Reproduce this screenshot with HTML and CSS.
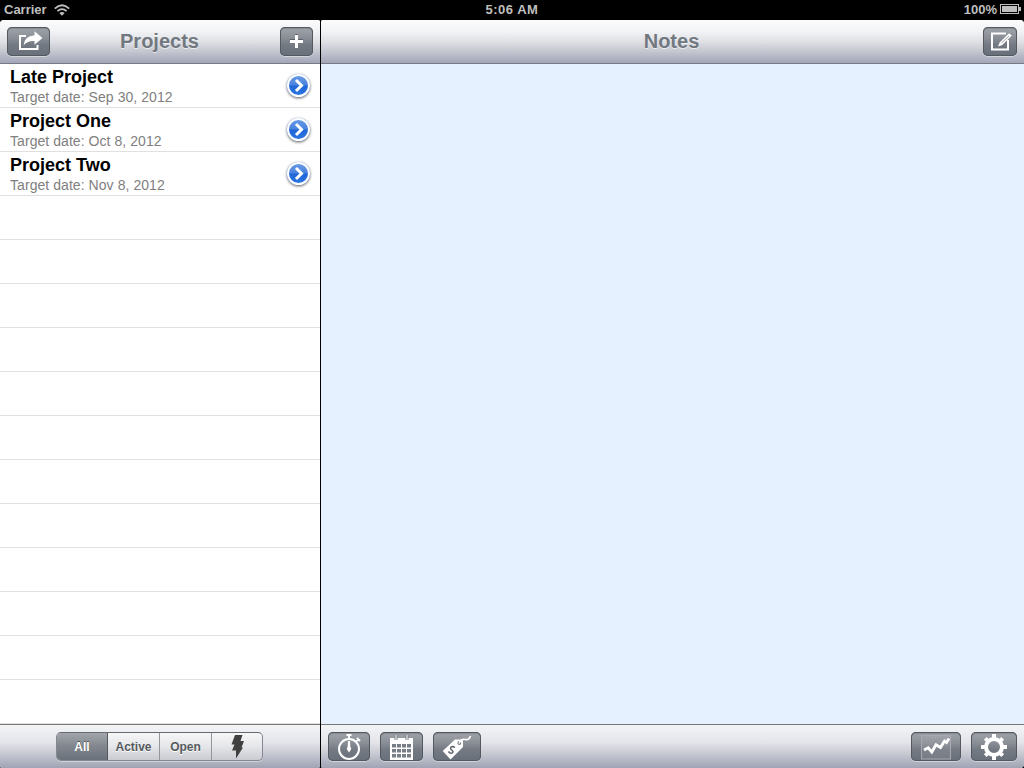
FILE: index.html
```html
<!DOCTYPE html>
<html lang="en">
<head>
<meta charset="utf-8">
<title>Projects</title>
<link rel="stylesheet" href="styles.css">
</head>
<body>
<div class="screen">
  <header class="status">
    <div class="status-left"><span class="carrier">Carrier</span>
      <svg class="wifi" width="16" height="12" viewBox="0 0 16 12"><g fill="none" stroke="#bfbfbf" stroke-width="1.8"><path d="M.8 4.6Q8-2.2 15.2 4.6"/><path d="M3.4 7.2Q8 3 12.6 7.2"/></g><path d="M5.3 9Q8 6.8 10.7 9L8 11.7Z" fill="#bfbfbf"/></svg>
    </div>
    <span class="clock">5:06 AM</span>
    <div class="status-right"><span class="percent">100%</span>
      <svg class="battery" width="21" height="10" viewBox="0 0 21 10"><rect x=".5" y=".5" width="18" height="9" fill="none" stroke="#bfbfbf"/><rect x="2" y="2" width="15" height="6" fill="#bfbfbf"/><path d="M19 3h2v4h-2z" fill="#bfbfbf"/></svg>
    </div>
  </header>
  <div class="split">
    <section class="pane sidebar">
      <div class="bar navbar">
        <button class="btn share" aria-label="Share"><svg width="43" height="29" viewBox="0 0 43 29"><path d="M19 9H13V22H30.500V18" fill="none" stroke="#fff" stroke-width="2"/><path d="M27.500 4.300L35.500 11L27.500 17.700V14Q20.500 13.200 16.500 18.500Q17 9 27.500 8.200Z" fill="#fff"/></svg></button>
        <h1 class="title">Projects</h1>
        <button class="btn add" aria-label="Add"><svg width="33" height="29" viewBox="0 0 33 29"><path d="M10 13h5V8h3v5h5v3h-5v5h-3v-5h-5z" fill="#fff"/><path d="M10 12.500h5M18 12.500h5M15 7.500h3" stroke="#4b5056" stroke-opacity=".7"/></svg></button>
      </div>
      <ul class="list">
        <li class="row"><div><div class="name">Late Project</div><div class="date">Target date: Sep 30, 2012</div></div><span class="disclosure"><svg width="23" height="23" viewBox="0 0 23 23"><path d="M9 6L14.500 11.500L9 17" fill="none" stroke="#fff" stroke-width="3"/></svg></span></li>
        <li class="row"><div><div class="name">Project One</div><div class="date">Target date: Oct 8, 2012</div></div><span class="disclosure"><svg width="23" height="23" viewBox="0 0 23 23"><path d="M9 6L14.500 11.500L9 17" fill="none" stroke="#fff" stroke-width="3"/></svg></span></li>
        <li class="row"><div><div class="name">Project Two</div><div class="date">Target date: Nov 8, 2012</div></div><span class="disclosure"><svg width="23" height="23" viewBox="0 0 23 23"><path d="M9 6L14.500 11.500L9 17" fill="none" stroke="#fff" stroke-width="3"/></svg></span></li>
        <li class="row"></li><li class="row"></li><li class="row"></li><li class="row"></li>
        <li class="row"></li><li class="row"></li><li class="row"></li><li class="row"></li>
        <li class="row"></li><li class="row"></li><li class="row"></li><li class="row"></li>
      </ul>
      <div class="bar toolbar filters">
        <div class="segments">
          <button class="segment selected">All</button>
          <button class="segment">Active</button>
          <button class="segment">Open</button>
          <button class="segment" aria-label="Quick"><svg width="13" height="24" viewBox="0 0 13 24"><path d="M4 0H11.500L9.500 6H13L10.500 12.500H12L5 23.500V15.500H1L3.500 9.500H.5Z" fill="#404040"/></svg></button>
        </div>
      </div>
    </section>
    <section class="pane main">
      <div class="bar navbar">
        <h1 class="title">Notes</h1>
        <button class="btn compose" aria-label="Compose"><svg width="34" height="29" viewBox="0 0 34 29"><path d="M23 6.500H9V22.500H25V13" fill="none" stroke="#fff" stroke-width="2"/><path d="M15 19.500L16.700 15.500L26 6.300L28.800 8.500L19.300 18Z" fill="#fff"/><path d="M18.500 16L26 9" stroke="#777d84" stroke-width=".7"/></svg></button>
      </div>
      <div class="notes"></div>
      <div class="bar toolbar">
        <button class="btn timer" aria-label="Timer"><svg width="42" height="29" viewBox="0 0 42 29"><g fill="none" stroke="#fff" stroke-width="2"><circle cx="21" cy="17" r="10"/><path d="M21 3V7M18.500 3H23.500M28 9.500L30.500 7.500M29 6L32 9"/></g><path d="M20 9H22L22.300 14.500L23.300 17L21 20.500L18.700 17L19.700 14.500Z" fill="#fff"/></svg></button>
        <button class="btn calendar" aria-label="Calendar"><svg width="43" height="29" viewBox="0 0 43 29"><path d="M10 6H33V28H10Z" fill="#fff"/><path d="M12 12h4v3.500h-4zM17 12h4v3.500h-4zM22 12h4v3.500h-4zM27 12h4v3.500h-4zM12 17h4v3.500h-4zM17 17h4v3.500h-4zM22 17h4v3.500h-4zM27 17h4v3.500h-4zM12 22h4v3.500h-4zM17 22h4v3.500h-4zM22 22h4v3.500h-4zM27 22h4v3.500h-4z" fill="#777d84"/><path d="M16 3v5M27 3v5" stroke="#777d84" stroke-width="3"/><path d="M16 3v5M27 3v5" stroke="#d5d7da" stroke-width="1.500"/></svg></button>
        <button class="btn tag" aria-label="Expenses"><svg width="48" height="29" viewBox="0 0 48 29"><path d="M9.700 19L22 7.500H28.500L30 9V15L17.500 27.500Z" fill="#fff"/><circle cx="26.300" cy="11" r="1.900" fill="#777d84"/><path d="M26 11.500Q28 6.500 32 7.500T37.500 4" fill="none" stroke="#fff" stroke-width="1.600"/><path d="M22 15.500C19 13.500 16.500 15.500 18 17.300S20.800 19.500 19.500 20.700S16.500 21 15.500 19.500" fill="none" stroke="#5f666e" stroke-width="1.500"/></svg></button>
        <span class="spacer"></span>
        <button class="btn chart" aria-label="Chart"><svg width="50" height="29" viewBox="0 0 50 29"><rect x="10.500" y="3.500" width="29" height="23.500" fill="#fff" fill-opacity=".08" stroke="#a7abb0"/><path d="M13 18L17.200 15.800L20.800 20L25 12.800L29.500 15.500L33.500 9L35.500 10.500L38 6.500" fill="none" stroke="#fff" stroke-width="2.800"/></svg></button>
        <button class="btn gear" aria-label="Settings"><svg width="46" height="29" viewBox="0 0 46 29"><circle cx="23" cy="15" r="8" fill="none" stroke="#fff" stroke-width="4"/><g stroke="#fff" stroke-width="4"><path d="M23 2V6M23 24V28M10 15H14M32 15H36M14.300 6.300L16.600 8.600M29.400 21.400L31.700 23.700M14.300 23.700L16.600 21.400M29.400 8.600L31.700 6.300"/></g></svg></button>
      </div>
    </section>
  </div>
</div>
</body>
</html>
```
FILE: styles.css
```css
* { box-sizing: border-box; }
body { margin: 0; background: #000; font-family: "Liberation Sans", Arial, sans-serif; }
.screen { width: 1024px; height: 768px; display: flex; flex-direction: column; background: #000; overflow: hidden; }
.status { height: 20px; display: grid; grid-template-columns: 1fr auto 1fr; align-items: start; padding: 1px 3px 0 4px; color: #bfbfbf; font-size: 13px; font-weight: bold; line-height: 18px; }
.status-left, .status-right { display: flex; align-items: center; height: 18px; }
.status-left { gap: 7px; }
.status-right { justify-content: flex-end; gap: 3px; }
.wifi { margin-top: 0; }
.battery { margin-bottom: 2px; }
.clock { height: 18px; letter-spacing: .5px; padding-right: 1px; }
.split { flex: 1; display: flex; gap: 1px; min-height: 0; }
.pane { display: flex; flex-direction: column; overflow: hidden; }
.sidebar { width: 320px; background: #fff; border-radius: 4px 2px 2px 2px; }
.main { flex: 1; background: #e5f1ff; border-radius: 2px 4px 4px 2px; }
.bar { height: 44px; flex: none; display: flex; align-items: center; }
.navbar { position: relative; justify-content: space-between; padding: 0 7px; background: linear-gradient(#fbfbfc 0, #f3f4f6 25%, #dedfe4 52%, #a3a6b7 100%); border-bottom: 1px solid #777985; }
.main .navbar { justify-content: flex-end; }
.title { position: absolute; left: 0; right: 0; top: 9px; margin: 0; text-align: center; font-size: 20px; line-height: 24px; color: #717880; text-shadow: 0 1px 0 rgba(255,255,255,.6); pointer-events: none; }
.sidebar .title { padding-right: 1px; }
.main .title { padding-right: 2px; }
.btn { height: 29px; padding: 0; border: 0; border-radius: 5px; background: linear-gradient(#a2a5ab 0, #888c94 40%, #747a83 60%, #686f78 100%); box-shadow: inset 0 0 0 1px #545960, inset 0 2px 1px rgba(50,55,63,.2), 0 1px 0 rgba(255,255,255,.4); }
.btn svg { display: block; }
.share { width: 43px; }
.add { width: 33px; }
.compose { width: 34px; }
.list { flex: 1; margin: 0; padding: 0; list-style: none; overflow: hidden; }
.row { height: 44px; border-bottom: 1px solid #e0e0e0; padding: 0 10px; display: flex; justify-content: space-between; }
.name { font-size: 18px; line-height: 22px; font-weight: bold; padding-top: 2px; color: #000; }
.date { font-size: 14px; line-height: 17px; color: #808080; letter-spacing: .06px; padding-top: 1px; }
.disclosure { width: 23px; height: 23px; margin: 10px 0 0; border-radius: 50%; background: linear-gradient(#6f9ee8 0, #4a83df 48%, #1f66d6 52%, #2f79e6 100%); box-shadow: inset 0 0 0 2px #fff, 0 1px 3px rgba(0,0,0,.65); }
.disclosure svg { display: block; }
.toolbar { padding: 0 7px; gap: 10px; border-top: 1px solid #777; background: linear-gradient(#f3f4f6 0, #e4e5ea 40%, #c9cbd4 65%, #a0a3b3 100%); }
.filters { justify-content: center; padding: 0 1px 0 0; }
.segments { width: 207px; height: 29px; display: grid; grid-template-columns: 51px 52px 52px 50px; border-radius: 5px; overflow: hidden; border: 1px solid #85888f; border-top-color: #66696f; background: linear-gradient(#f6f6f7, #e5e6e9 50%, #c9cbd2); box-shadow: 0 1px 0 rgba(255,255,255,.4); }
.segment { border: 0; border-right: 1px solid #93959b; background: none; padding: 1px 0 0; display: flex; align-items: center; justify-content: center; font: bold 12px/27px "Liberation Sans", Arial, sans-serif; color: #55595e; text-shadow: 0 1px 0 #fff; }
.segment:last-child { border-right: 0; padding: 0 0 1px 1px; }
.segment.selected { color: #fff; text-shadow: 0 -1px 0 #555; background: linear-gradient(#a2a5ab, #838890 45%, #686f78); border-color: #545960; }
.notes { flex: 1; }
.timer { width: 42px; }
.calendar { width: 43px; }
.tag { width: 48px; }
.spacer { flex: 1; }
.chart { width: 50px; }
.gear { width: 46px; }
```
